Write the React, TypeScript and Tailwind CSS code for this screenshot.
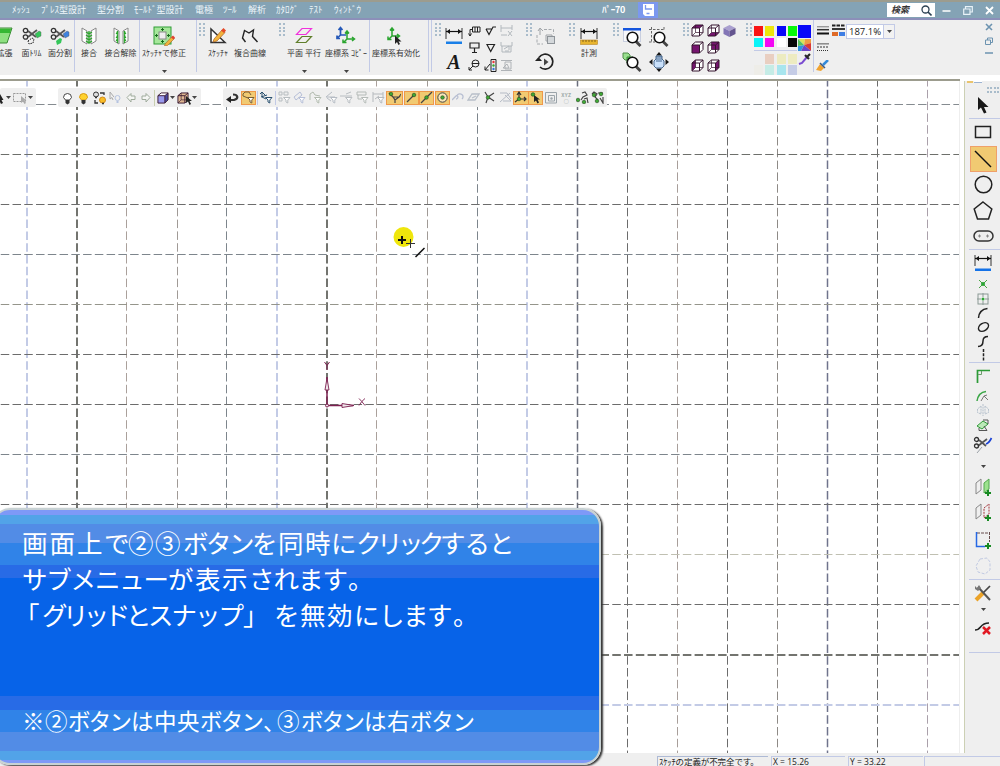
import React from "react";

type Kids = { children?: React.ReactNode };

function Ico({ w, h, children }: { w: number; h: number } & Kids) {
  return (
    <svg width={w} height={h} viewBox={`0 0 ${w} ${h}`} fill="none" className="block shrink-0">
      {children}
    </svg>
  );
}

const Sep = () => <div className="h-[52px] w-px shrink-0 bg-[#c2cae6]" />;

function Grip() {
  return (
    <div className="mt-[3px] grid h-[12px] w-[6px] shrink-0 grid-cols-2 gap-x-[2px] gap-y-[1.5px]">
      {Array.from({ length: 8 }, (_, i) => (
        <span key={i} className="h-[2px] w-[2px] bg-[#a9bccb]" />
      ))}
    </div>
  );
}

function Caret() {
  return (
    <Ico w={5} h={3}>
      <path d="M0 0H5L2.5 3Z" fill="#444" />
    </Ico>
  );
}

function Tool({ label, className, caret, children }: { label: string; className: string; caret?: boolean } & Kids) {
  return (
    <div className={`flex h-[55px] shrink-0 flex-col items-center overflow-hidden whitespace-nowrap ${className}`}>
      <div className="mt-[6px] flex h-[20px] items-center justify-center">{children}</div>
      <span className="mt-[2px] h-[9px] text-[8px] leading-[9px] text-[#333]">{label}</span>
      {caret && <div className="mt-[13px]"><Caret /></div>}
    </div>
  );
}

/* ---------- shared drawings ---------- */
function Dim({ bar, w = 18, ruler }: { bar?: string; w?: number; ruler?: boolean }) {
  return (
    <Ico w={w} h={18}>
      <path d={`M1 1V12M${w - 1} 1V12`} stroke="#333" strokeWidth="1" />
      <path d={`M1 4.5H${w - 1}`} stroke="#111" strokeWidth="1.2" />
      <path d={`M1.5 4.5L5 2V7ZM${w - 1.5} 4.5L${w - 5} 2V7Z`} fill="#111" />
      {bar && <rect x="1" y="14.5" width={w - 2} height="2.5" fill={bar} />}
      {ruler && (
        <g>
          <rect x="0.5" y="13" width="17" height="4.5" fill="#e8b42e" stroke="#b9862a" strokeWidth=".6" />
          <path d="M3 13v2M6 13v2M9 13v2M12 13v2M15 13v2" stroke="#705010" strokeWidth=".8" />
        </g>
      )}
    </Ico>
  );
}

function Shears({ a, b, c }: { a?: string; b?: string; c?: string }) {
  return (
    <Ico w={20} h={18}>
      <path d="M6 4L14 10M6 10L15 3" stroke="#555" strokeWidth="1.8" />
      <circle cx="3.5" cy="3.5" r="2.2" stroke="#333" strokeWidth="1.3" />
      <circle cx="3.5" cy="10" r="2.2" stroke="#333" strokeWidth="1.3" />
      {a && <path d="M13 7l4-3 2 1v4l-4 2z" fill={a} stroke="#555" strokeWidth=".4" />}
      {b && <path d="M6 14l4-3 2 1-1 4-4 2z" fill={b} />}
      {c && <path d="M6 14l4-3 2 1-1 4-4 1z" stroke={c} strokeDasharray="1.5 1" />}
    </Ico>
  );
}

function Join({ split }: { split?: boolean }) {
  return (
    <Ico w={16} h={18}>
      <path d="M1 1L6 4V17L1 14ZM15 1L10 4V17L15 14Z" fill="#fff" stroke="#888" strokeWidth="1" />
      {split ? (
        <path d="M4.500 4V16M11.500 4V16M3 6l2 1M3 10l2 1M13 6l-2 1M13 10l-2 1M3 13l2 1M13 13l-2 1" stroke="#2ca52c" strokeWidth="1.5" />
      ) : (
        <path d="M8 4V17M5 5l3 2l3-2M5 8l3 2l3-2M5 11l3 2l3-2M5 14l3 2l3-2" stroke="#2ca52c" strokeWidth="1.3" />
      )}
    </Ico>
  );
}

function Lens({ kind }: { kind: "window" | "area" | "part" }) {
  return (
    <Ico w={20} h={20}>
      {kind === "window" && (
        <g>
          <rect x="1.500" y="1.500" width="17" height="13" fill="#f8f8fa" stroke="#c9cfdf" />
          <rect x="1" y="1" width="18" height="2.500" fill="#1455dd" />
        </g>
      )}
      {kind === "area" && <path d="M0 2.500H15M2.500 0V16M15 0V4M0 15H6" stroke="#666" strokeDasharray="2.500 1.500" />}
      {kind === "part" && (
        <g>
          <path d="M1 1H6L8 3V8H3L1 6Z" fill="#9be08f" stroke="#4f8b48" />
          <path d="M5 5H11V11H5Z" fill="#5fd552" stroke="#388b38" />
        </g>
      )}
      <path d="M14 14.500L18.500 19" stroke="#444" strokeWidth="2.800" />
      <circle cx="10.500" cy="10.500" r="5.300" fill="#fff" stroke="#111" strokeWidth="1.600" />
    </Ico>
  );
}

function Cube({ face, size = 13 }: { face: string; size?: number }) {
  const p = "#76146f";
  return (
    <svg width={size} height={size} viewBox="0 0 13 13" fill="none" className="block shrink-0">
      <path d="M1 4L4.500 1H12V8.500L8.500 12H1Z" fill="#fff" />
      {face === "top" && <path d="M1 4L4.500 1H12L8.500 4Z" fill={p} />}
      {face === "bottom" && <path d="M1 12L4.500 8.500H12L8.500 12Z" fill={p} />}
      {face === "front" && <path d="M1 4H8.500V12H1Z" fill={p} />}
      {face === "back" && <path d="M4.500 1H12V8.500H4.500Z" fill={p} />}
      {face === "left" && <path d="M1 4L4.500 1V8.500L1 12Z" fill={p} />}
      {face === "right" && <path d="M8.500 4L12 1V8.500L8.500 12Z" fill={p} />}
      {face === "violet" && (
        <g>
          <path d="M1 4H8.500V12H1Z" fill="#9a9aee" />
          <path d="M8.500 4L12 1V8.500L8.500 12Z" fill="#4848a0" />
        </g>
      )}
      {face === "brown" && <path d="M1 4L4.500 1H12V8.500L8.500 12H1Z" fill="#dfb792" />}
      <path d="M1 4H8.500V12H1ZM1 4L4.500 1H12L8.500 4M12 1V8.500L8.500 12" stroke="#35152f" strokeWidth="1" />
      {face !== "front" && face !== "violet" && <path d="M4.500 1V8.500H12M4.500 8.500L1 12" stroke="#35152f" strokeWidth=".7" />}
    </svg>
  );
}

function Axes({ blue, cursor }: { blue?: boolean; cursor?: boolean }) {
  return (
    <Ico w={20} h={20}>
      {blue && <path d="M4.500 2V9L1.500 12M4.500 9H10M2.500 4L4.500 1.500L6.500 4M1 9.500V12.500H4" stroke="#2659b8" strokeWidth="1.700" />}
      <g transform={blue ? "translate(6 3)" : "translate(1 0)"}>
        <path d="M5 2V10L2 13M5 10H12M3 4.500L5 2L7 4.500M1 10.500V13.500H4.500M10 8L12.500 10L10 12" stroke="#2aa52f" strokeWidth="1.500" />
      </g>
      {cursor && <path d="M9 9.500V18L11 16L12.500 19L14 18L12.500 15.500H15.500Z" fill="#222" />}
    </Ico>
  );
}

function Cells({ children, className }: { className: string } & Kids) {
  return <div className={`grid shrink-0 place-items-center ${className}`}>{children}</div>;
}

function TextA() {
  return <span className="font-['Liberation_Serif',serif] text-[20px] font-bold italic leading-[18px] text-[#181818]">A</span>;
}

/* ---------- title bar ---------- */
function TitleBar() {
  return (
    <header className="flex h-[20px] shrink-0 items-center border-b-2 border-t-2 border-b-[#8c8fb9] border-t-[#9c9c8e] bg-[#84a3b5] text-[9px] leading-[16px] text-[#eef6fa]">
      <nav className="flex w-[602px] whitespace-nowrap pl-[12px]">
        <span className="w-[29px]">ﾒｯｼｭ</span>
        <span className="w-[56px]">ﾌﾟﾚｽ型設計</span>
        <span className="w-[37px]">型分割</span>
        <span className="w-[61px]">ﾓｰﾙﾄﾞ型設計</span>
        <span className="w-[28px]">電極</span>
        <span className="w-[25px]">ﾂｰﾙ</span>
        <span className="w-[28px]">解析</span>
        <span className="w-[33px]">ｶﾀﾛｸﾞ</span>
        <span className="w-[25px]">ﾃｽﾄ</span>
        <span>ｳｨﾝﾄﾞｳ</span>
      </nav>
      <span className="w-[36px] whitespace-nowrap font-bold tracking-[-0.3px] text-white">ﾊﾟｰ70</span>
      <div className="flex h-[16px] w-[20px] items-center justify-center bg-[#7b98ef]">
        <Ico w={11} h={12}>
          <path d="M0 0H11V12H2L0 10Z" fill="#fff" />
          <path d="M2.500 1V5H9M3.500 9.500H6.500" stroke="#7b98ef" strokeWidth="1.300" />
        </Ico>
      </div>
      <div className="ml-[229px] flex h-[14px] w-[48px] items-center justify-between bg-white pl-[4px] pr-[3px]">
        <span className="text-[9px] font-bold italic leading-[12px] text-[#333]">検索</span>
        <Ico w={11} h={11}>
          <circle cx="4.500" cy="4.500" r="3.500" stroke="#2b4052" strokeWidth="1.300" />
          <path d="M7 7L10.500 10.500" stroke="#2b4052" strokeWidth="1.600" />
        </Ico>
      </div>
      <div className="ml-[7px] flex items-center gap-[12px]">
        <Ico w={9} h={9}><path d="M0.500 5H8.500" stroke="#fff" strokeWidth="1.500" /></Ico>
        <Ico w={10} h={9}><path d="M2.500 3V.700H9.300V6H7M.700 3H7V8.300H.700Z" stroke="#e8f2f8" strokeWidth="1.200" /></Ico>
        <Ico w={9} h={9}><path d="M1 1L8 8M8 1L1 8" stroke="#fff" strokeWidth="1.800" /></Ico>
      </div>
    </header>
  );
}

/* ---------- ribbon ---------- */
function Swatches() {
  return (
    <div className="w-[43px] shrink-0 pt-[6px]">
      <div className="grid grid-cols-4 gap-x-[2px] gap-y-[2px]">
        {["bg-[#f91414]", "bg-[#eee60b]", "bg-[#0808f8]", "bg-[#08f808]", "bg-[#08f4f8]", "bg-[#f408f4]", "bg-white", "bg-[#080808]"].map((c) => (
          <span key={c} className={`h-[9.500px] w-[9px] ${c}`} />
        ))}
      </div>
      <div className="mt-[3px] h-px bg-[#c2cae6]" />
      <div className="mt-[3px] grid grid-cols-4 gap-x-[2px] gap-y-[1.500px]">
        {["bg-[#efefef]", "bg-[#e9cfc1]", "bg-[#ecebc0]", "bg-[#edebc1]", "bg-[#eeede8]", "bg-[#c5ece6]", "bg-[#a8e5ee]", "bg-[#c5cce6]"].map((c) => (
          <span key={c} className={`h-[9.500px] w-[9px] ${c}`} />
        ))}
      </div>
    </div>
  );
}

function Ribbon() {
  return (
    <div className="flex h-[55px] shrink-0 bg-[#efefef]">
      <Tool label="拡張" className="-ml-[4px] w-[17px]">
        <Ico w={17} h={18}><path d="M3 1H16L11 16H0" fill="#8ee080" stroke="#3b8b35" /><path d="M3 2H15L14 6H1" fill="#35b733" /></Ico>
      </Tool>
      <Tool label="面ﾄﾘﾑ" className="ml-[4px] w-[29px]"><Shears a="#35c65a" c="#222" /></Tool>
      <Tool label="面分割" className="w-[28px]"><Shears a="#3f83df" b="#35c65a" /></Tool>
      <Sep />
      <Tool label="接合" className="w-[28px]"><Join /></Tool>
      <Tool label="接合解除" className="w-[35px]"><Join split /></Tool>
      <div className="w-[1px]" /><Sep />
      <Tool label="ｽｹｯﾁｬで修正" className="w-[48px]" caret>
        <Ico w={22} h={20}>
          <rect x="1" y="1" width="17" height="17" fill="#a6e79b" stroke="#2f9d34" />
          <rect x="6" y="6" width="7" height="7" fill="#eee" stroke="#888" />
          <path d="M9.500 2V5M9.500 14V17M2 9.500H5M14 9.500H17M8 3.500h3M8 15.500h3M3.500 8v3M15.500 8v3" stroke="#176b1c" />
          <path d="M12 18L19 10.500L21.500 12.500L14.500 19.500L11.500 20Z" fill="#f1b43c" stroke="#a8672c" strokeWidth=".600" />
          <path d="M18 11.500L20 9.500L22 11.500L20.500 13.500Z" fill="#e24432" />
        </Ico>
      </Tool>
      <div className="w-[8px]" /><Sep /><div className="w-[2px]" />
      <Grip />
      <Tool label="ｽｹｯﾁｬ" className="w-[26px]">
        <Ico w={18} h={18}>
          <path d="M2 2V15.500H16Z" fill="#fff" stroke="#333" strokeWidth="1.500" />
          <path d="M5 12L13 3L16 5.500L8 14L4 15Z" fill="#f2b33d" stroke="#a85f23" strokeWidth=".700" />
          <path d="M12 3.500L14.500 1L17 3.500L15 6Z" fill="#e34a2a" />
        </Ico>
      </Tool>
      <Tool label="複合曲線" className="w-[38px]">
        <Ico w={18} h={17}><path d="M4.500 14L1.500 10L3.500 2.500L8 5L12.500 2L11.500 8.500L16.500 14" stroke="#222" strokeWidth="1.400" /></Ico>
      </Tool>
      <div className="w-[10px]" /><Grip />
      <Tool label="平面 平行" className="w-[38px]" caret>
        <Ico w={18} h={18}><path d="M1.500 7.500L7 1.500H16.500L11 7.500Z" stroke="#f132dc" strokeWidth="1.200" /><path d="M1.500 15.500L7 9.500H16.500L11 15.500Z" stroke="#607f2c" strokeWidth="1.200" /></Ico>
      </Tool>
      <Tool label="座標系 ｺﾋﾟｰ" className="w-[46px]" caret><Axes blue /></Tool>
      <Sep />
      <Tool label="座標系有効化" className="w-[52px]"><Axes cursor /></Tool>
      <div className="w-[6px]" /><Sep /><div className="w-[2px]" /><Sep /><div className="w-[3px]" />
      <Grip />
      <Cells className="ml-[4px] w-[18px] grid-rows-[18px_30px] content-start pt-[7px]">
        <Dim bar="#197fe8" />
        <div className="pt-[3px]"><TextA /></div>
      </Cells>
      <Cells className="ml-[3px] w-[50px] grid-cols-[17px_15px_18px] grid-rows-[17px_17px_18px] content-start pt-[2px]">
        <Ico w={13} h={12}><path d="M4.500 2H12V7H4.500ZM7 2V7M9.500 2V7M4.500 4.500H2V11M0.500 8.500L2 11L3.500 8.500" stroke="#222" /></Ico>
        <Ico w={12} h={12}><path d="M1 4L4 9.500L8 2H11M1 4H7" stroke="#222" strokeWidth="1.200" /></Ico>
        <Ico w={14} h={13}><path d="M1 1V8M12 1V6M1 4H12M1 11H7M8 7L12 12M12 7L8 12" stroke="#b2b8bd" /></Ico>
        <Ico w={12} h={12}><path d="M1 1H10V6H1ZM5.500 6V10M3 10.500H8" stroke="#222" strokeWidth="1.200" /></Ico>
        <Ico w={12} h={12}><path d="M2 2.500H9.500L5.700 9.500Z" stroke="#222" strokeWidth="1.200" /></Ico>
        <Ico w={14} h={13}><path d="M1 1V5H12V1M2 5V11H11V5M4 8L9 5M9 5V9M5 10H9" stroke="#b2b8bd" /></Ico>
        <Ico w={13} h={12}><circle cx="7.500" cy="4.500" r="3.500" stroke="#222" /><path d="M4 4.500H11M5 7L1 11M1 8V11H4" stroke="#222" /></Ico>
        <Ico w={14} h={13}><path d="M7 .500H12V12.500H7ZM1 11L6 5M1 7.500V11H4.500" stroke="#222" /><circle cx="9.500" cy="3" r="1.200" fill="#e33" /><circle cx="9.500" cy="6.500" r="1.200" fill="#3a3" /><circle cx="9.500" cy="10" r="1.200" fill="#37d" /></Ico>
        <Ico w={14} h={13}><path d="M1 1.500H12M1 11.500H12M5 3H11V10H5ZM3 9L7 5L9 9Z" stroke="#afb3b7" /></Ico>
      </Cells>
      <div className="w-[10px]" /><Grip />
      <Cells className="w-[26px] grid-rows-[24px_27px] content-start pt-[4px]">
        <Ico w={20} h={20}><path d="M9 3.500H18.500V8M2 9V18H8" stroke="#a5a9ad" strokeDasharray="3 1.500" /><path d="M5 9V3M3 5L5 2L8 5M11 9H17V15H11Z" stroke="#a0a4a8" /><rect x="12.500" y="10.500" width="7" height="7" fill="#d4d8db" stroke="#8e9499" /></Ico>
        <Ico w={20} h={18}><path d="M4 4.500A7.500 7.500 0 1 1 5 14" stroke="#222" strokeWidth="1.700" /><path d="M0 8H7L3.500 4Z" fill="#222" /><path d="M9 5.500L13.500 9L9 12.500Z" fill="#444" /></Ico>
      </Cells>
      <div className="w-[11px]" /><Grip />
      <Tool label="計測" className="w-[28px]"><Dim ruler /></Tool>
      <div className="w-[10px]" /><Grip />
      <Cells className="-ml-px w-[54px] grid-cols-2 grid-rows-2 pt-[4px]">
        <Lens kind="window" /><Lens kind="area" /><Lens kind="part" />
        <Ico w={22} h={20}>
          <path d="M11 0L14 3.500H8ZM11 20L14 16.500H8ZM1 10L4.500 7V13ZM21 10L17.500 7V13Z" fill="#171717" />
          <path d="M6 9L8 7L8 4H14V7L16 9V14L14 16H8L6 14Z" fill="#c9e0fa" stroke="#46678c" />
          <path d="M9 4V10M11 4V10M13 4V10" stroke="#46678c" />
        </Ico>
      </Cells>
      <div className="w-[11px]" /><Grip />
      <Cells className="ml-px w-[47px] grid-cols-[15px_16px_16px] grid-rows-[17px_17px_18px] content-start pt-[2px]">
        <Cube face="top" /><Cube face="bottom" />
        <Ico w={13} h={14}><path d="M.500 4L6.500 1L12.500 4L6.500 7Z" fill="#aaa0cf" /><path d="M.500 4V10L6.500 13V7Z" fill="#8376b6" /><path d="M12.500 4V10L6.500 13V7Z" fill="#64558f" /></Ico>
        <Cube face="front" /><Cube face="back" /><span />
        <Cube face="left" /><Cube face="right" />
      </Cells>
      <div className="w-[9px]" /><Grip />
      <div className="w-[2px]" />
      <Swatches />
      <div className="ml-[1px] flex w-[13px] shrink-0 flex-col gap-[1px] pt-[5px]">
        <div className="h-[13px] bg-[#0808f8]" />
        <Ico w={13} h={12}><rect width="13" height="12" fill="#eee" /><path d="M6 6L0 0H7Z" fill="#d8e35a" /><path d="M6 6L7 0H13V4Z" fill="#ef9c42" /><path d="M6 6L13 4V12Z" fill="#d93a36" /><path d="M6 6L13 12H3Z" fill="#6d45c7" /><path d="M6 6L3 12H0V7Z" fill="#2f95df" /><path d="M6 6L0 7V0Z" fill="#55c060" /></Ico>
        <Ico w={13} h={13}><path d="M1 12L4 11L9 5" stroke="#7a4bd0" strokeWidth="2" /><path d="M7 3L11 7M9 5L12 2" stroke="#282828" strokeWidth="2.200" /></Ico>
      </div>
      <div className="w-[2px]" /><Sep />
      <div className="ml-px flex w-[15px] shrink-0 flex-col items-center gap-[8px] pt-[6px]">
        <Ico w={12} h={9}><path d="M0 .800H12" stroke="#777" /><path d="M0 3.700H12" stroke="#333" strokeWidth="1.500" /><path d="M0 7.500H12" stroke="#111" strokeWidth="2" /></Ico>
        <Ico w={12} h={9}><path d="M0 .800H12" stroke="#888" strokeWidth="1.500" /><path d="M0 4H12" stroke="#333" strokeDasharray="2 1" /><path d="M0 7.500H12" stroke="#333" strokeDasharray="1 1" /></Ico>
        <Ico w={13} h={12}><path d="M7 5L12 0" stroke="#338ad9" strokeWidth="2.500" /><path d="M4 4L8 8L5 11L0 10Z" fill="#f0a331" /><path d="M4 3L9 8" stroke="#3b5b86" strokeWidth="1.500" /></Ico>
      </div>
      <div className="ml-[2px] w-[14px] shrink-0 pt-[4px]">
        <Ico w={13} h={13}><path d="M0 1.500H13" stroke="#222" strokeWidth="2" strokeDasharray="3.500 1" /><path d="M0 5H13" stroke="#222" strokeWidth="1.800" /><rect x="0" y="8" width="6" height="4" fill="#df6b28" /><rect x="7" y="8" width="6" height="4" fill="#3e7ee4" /></Ico>
      </div>
      <div className="mt-[4px] flex h-[15px] w-[49px] shrink-0 border border-[#c2cae6] bg-white">
        <span className="w-[36px] text-center font-['Open_Sans','Noto_Sans',sans-serif] text-[9.500px] leading-[14px] text-[#222]">187.1%</span>
        <span className="flex flex-1 items-center justify-center border-l border-[#c2cae6] bg-[#f2f2f2]"><Caret /></span>
      </div>
      <div className="ml-[90px] flex flex-col gap-[6px] pt-[3px]">
        <Ico w={8} h={8}><path d="M1 1L7 7M7 1L1 7" stroke="#6c93b0" strokeWidth="1.600" /></Ico>
        <Ico w={8} h={8}><path d="M2.500 3V1H7.500V5.500H5.500M.500 3H5.500V7.500H.500Z" stroke="#6c93b0" /></Ico>
        <Ico w={8} h={6}><path d="M0 2H8" stroke="#6c93b0" strokeWidth="1.500" /></Ico>
      </div>
    </div>
  );
}

/* ---------- drawing canvas ---------- */
const verticals: [number, string, number][] = [
  [27, "#c3cbe6", 2], [77, "#73746f", 2], [126.5, "#aaa09b", 1], [177.5, "#a09a96", 1], [226.5, "#7d858c", 1],
  [277, "#c3cbe6", 2], [327, "#73746f", 2], [376.5, "#aaa09b", 1], [427.5, "#a09a96", 1], [477.5, "#7d858c", 1],
  [527, "#c3cbe6", 2], [577.5, "#6a6e7c", 1.5], [627.5, "#6c6c6c", 1], [677.5, "#a89e9a", 1], [727.5, "#6c6c6c", 1],
  [777.5, "#8e8a86", 1], [827.5, "#6f738c", 1.5], [877.5, "#6c6c6c", 1], [927.5, "#aaa0aa", 1],
];
const horizontals: [number, string, number][] = [
  [23.5, "#858b90", 1], [73.5, "#6d6f6b", 1], [123.5, "#6c6c6c", 1], [173.5, "#7d858c", 1], [223.5, "#95958b", 1],
  [273.5, "#6c6c6c", 1], [323.5, "#6c6c6c", 1], [373.5, "#7d858c", 1], [423.5, "#6c6c6c", 1], [473.5, "#c0c0b2", 1],
  [523.5, "#6c6c6c", 1], [574, "#73746f", 2], [624, "#c3cbe6", 2],
];

function GridDrawing() {
  return (
    <svg width="959" height="672" viewBox="0 0 959 672" fill="none" className="block">
      {verticals.map(([x, c, w]) => (
        <path key={x} d={`M${x} -3V672`} stroke={c} strokeWidth={w} strokeDasharray="8.500 3.300" />
      ))}
      {horizontals.map(([y, c, w]) => (
        <path key={y} d={`M-11 ${y}H959`} stroke={c} strokeWidth={w} strokeDasharray="8.500 3.260" />
      ))}
      <circle cx="403.500" cy="156" r="10" fill="#efe60c" />
      <path d="M402 155V163M398 159H406" stroke="#111" strokeWidth="2" />
      <path d="M410.500 158V167M406 162.500H415" stroke="#333" />
      <path d="M415.500 176L424.500 167" stroke="#111" strokeWidth="1.500" />
      <g stroke="#7d2050">
        <path d="M327 323V296" strokeWidth="1.500" />
        <path d="M327 297L325 309H329Z" fill="#efe7eb" strokeWidth=".900" />
        <path d="M327 324.500H353" strokeWidth="1.500" />
        <path d="M342 322.500L354 324.500L342 326.500Z" fill="#efe7eb" strokeWidth=".900" />
        <path d="M324.500 281L327 284.500L329.500 281M327 284.500V289" />
        <path d="M359 317.500L361.800 320.500L365 317.500M361.800 320.500L359 324.500M361.800 320.500L365 324.500" strokeWidth=".900" />
        <circle cx="327" cy="324.500" r="1.500" fill="#efe7eb" />
      </g>
    </svg>
  );
}

function Bulb({ on }: { on?: boolean }) {
  return (
    <Ico w={11} h={14}>
      <path d="M3.500 9L1.500 6.500A4 4 0 1 1 9.500 6.500L7.500 9Z" fill={on ? "#ffd22e" : "#fff"} stroke={on ? "#d69a14" : "#444"} />
      <path d="M3.500 9H7.500V12L5.500 13.500L3.500 12Z" fill="#333" />
    </Ico>
  );
}

const Mini = ({ children, w = "w-[15.700px]" }: { w?: string } & Kids) => (
  <span className={`flex shrink-0 justify-center ${w}`}>{children}</span>
);

const Hot = ({ children, w }: { w: string } & Kids) => (
  <span className={`flex h-[14px] shrink-0 items-center justify-center border border-[#ef9848] bg-[#f1ca72] ${w}`}>{children}</span>
);

function Filter({ d, color }: { d: string; color: string }) {
  return (
    <Ico w={13} h={13}>
      <path d={d} stroke={color} />
      <path d="M5.500 6.500H12L9.800 9V12L8 11V9Z" fill="#fff" stroke={color} />
    </Ico>
  );
}

const Dots = ({ d, pts, line = "#444" }: { d: string; pts: number[][]; line?: string }) => (
  <Ico w={13} h={13}>
    <path d={d} stroke={line} strokeWidth="1.200" />
    {pts.map(([x, y]) => <circle key={`${x}-${y}`} cx={x} cy={y} r="1.800" fill="#3da934" stroke="#23461d" strokeWidth=".600" />)}
  </Ico>
);

function FloatBars() {
  const bar = "absolute top-[7px] flex h-[19px] items-center rounded-[2px] bg-[#efefef]";
  return (
    <>
      <div className={`${bar} left-0 w-[36px]`}>
        <Ico w={4} h={12}><path d="M0 2L3.500 8H1.500L3 11L1 12L0 10Z" fill="#222" /></Ico>
        <span className="ml-[2px]"><Caret /></span>
        <span className="ml-[2px]"><Ico w={14} h={12}><path d="M.500 1.500H12.500V9.500H.500Z" stroke="#999" strokeDasharray="2 1" /><path d="M8 4V11L10 9.500L11.500 12L13 11L11.500 8.500H13.500Z" fill="#aaa" /></Ico></span>
        <span className="ml-[1px]"><Caret /></span>
      </div>
      <div className={`${bar} left-[58px] w-[143px] pl-[2px]`}>
        <Mini><Bulb /></Mini><Mini><Bulb on /></Mini>
        <Mini><Ico w={13} h={14}><circle cx="3" cy="3.500" r="2.500" stroke="#333" fill="#ddd" /><circle cx="9.500" cy="9" r="3" fill="#f8bd27" stroke="#d28b18" /><path d="M7 2H11V4M2 9V12H5M2 6.500H4M9 12.500H11" stroke="#333" strokeWidth="1.300" /></Ico></Mini>
        <Mini><Ico w={12} h={13}><path d="M1 1V8L3 6.500L4 9M1 1L5 6" stroke="#aaa" /><circle cx="8.500" cy="7" r="2.500" stroke="#b5c3e0" /><path d="M8.500 10V12" stroke="#b5c3e0" strokeWidth="2" /></Ico></Mini>
        <Mini><Ico w={10} h={11}><path d="M1 5.500L5 1.500V4H9V7.500H5V10Z" fill="#f5f6f4" stroke="#9fab9c" /></Ico></Mini>
        <Mini><Ico w={10} h={11}><path d="M9 5.500L5 1.500V4H1V7.500H5V10Z" fill="#f5f6f4" stroke="#9fab9c" /></Ico></Mini>
        <span className="h-[16px] w-px bg-[#c9cfb0]" />
        <Mini w="w-[15px]"><Cube face="violet" size={12} /></Mini><Caret />
        <Mini><span className="relative block"><Cube face="brown" size={12} /><span className="absolute -right-[3px] top-[4px]"><Ico w={6} h={9}><path d="M0 0V7L2 5.500L3.500 9L5 8L3.500 5H6Z" fill="#222" /></Ico></span></span></Mini>
        <span className="ml-[1px]"><Caret /></span>
      </div>
      <div className={`${bar} left-[223px] w-[384px] pl-[2px]`}>
        <Mini><Ico w={13} h={10}><path d="M5 7H8C13 5.500 12 1.500 7 1.500" stroke="#333" strokeWidth="2.200" /><path d="M0 6.500L5 3V10Z" fill="#222" /></Ico></Mini>
        <Hot w="w-[15px]"><Filter d="M1 3L3 1H7L9 4M1 3V5L6 7" color="#795f35" /></Hot>
        <span className="mx-[1px] h-[14px] w-px bg-[#c2cae6]" />
        <Mini><Filter d="M2 1V6L6 8M0 3L2 1L5 4M1 6L7 4" color="#2a506e" /></Mini>
        <span className="ml-px h-[14px] w-px bg-[#c2cae6]" />
        <Mini><Filter d="M1 1H4V4H1ZM6 1H10V4H6ZM1 7H4V10H1Z" color="#b7bdc0" /></Mini>
        <Mini><Filter d="M1 6L7 1L9 4L3 9Z" color="#b6bfd8" /></Mini>
        <Mini><Filter d="M1 9V3L4 1L6 4L11 5" color="#b2bbaf" /></Mini>
        <Mini><Filter d="M1 6L7 1M1 6H10M2 7L6 10" color="#b6bcc4" /></Mini>
        <Mini><Filter d="M0 5H12M6 3L11 1" color="#b9bec2" /></Mini>
        <Mini><Filter d="M1 1H10V4H1ZM2 4V8H6" color="#b5bbb8" /></Mini>
        <Mini><Filter d="M1 1V11M11 1V6M1 3H11M3 8L7 5" color="#b5b9bd" /></Mini>
        <Hot w="w-[17px]"><Dots d="M1 2L5 6L7 9V12M5 6H11L7 9M11 6L13 3" pts={[[3, 3]]} /></Hot>
        <Hot w="ml-[1px] w-[15px]"><Dots d="M2 11L9 4" pts={[[9, 4]]} /></Hot>
        <Hot w="w-[15px]"><Dots d="M1 12L12 1" pts={[[6.5, 6.5]]} /></Hot>
        <Hot w="ml-[1px] w-[15px]"><Ico w={13} h={13}><circle cx="6.500" cy="6.500" r="4.700" stroke="#444" fill="#f7e4b8" /><circle cx="6.500" cy="6.500" r="1.800" fill="#3da934" stroke="#23461d" strokeWidth=".600" /></Ico></Hot>
        <Mini><Ico w={13} h={13}><path d="M0 9L4 5C6 3 7 8 4 8M5 4C9 1 13 5 10 8" stroke="#b8bfd2" strokeWidth="1.300" /></Ico></Mini>
        <Mini><Ico w={13} h={13}><path d="M1 9L5 3H12L8 9ZM5 7L9 5" stroke="#b8bfc9" strokeWidth="1.300" /></Ico></Mini>
        <Mini><Dots d="M2 1L5 6L3 12M5 6L11 2M5 6L11 10" pts={[[5, 6.5]]} /></Mini>
        <Mini><Ico w={13} h={13}><path d="M1 2H8L12 8M1 11L11 2M4 10H12L6 4" stroke="#b5bbc5" /></Ico></Mini>
        <Hot w="w-[16px]"><Dots d="M5 2V8L1 11M5 8H12M3 4L5 1L7 4M10 6L12 8L10 10" pts={[[5, 8]]} line="#333" /></Hot>
        <Hot w="-ml-px w-[15px]"><Ico w={13} h={13}><path d="M5 4V11L7 9.500L8.500 12.500L10 11.500L8.500 8.500H11Z" fill="#222" /><circle cx="4" cy="3.500" r="1.800" fill="#3da934" stroke="#23461d" strokeWidth=".600" /></Ico></Hot>
        <Mini><Ico w={12} h={12}><path d="M.500 .500H11.500V11H.500ZM3.500 3.500H9.500V9H3.500Z" stroke="#9ba4aa" /><circle cx="6.500" cy="6.500" r="1.200" fill="#9ba4aa" /></Ico></Mini>
        <Mini><span className="text-center text-[5px] font-bold leading-[6px] tracking-[.5px] text-[#9eaaa8]">XYZ<br />○</span></Mini>
        <Mini><Dots d="M6 2L9 1L11 4L7 6L5 9M8 8L11 7L12 12" pts={[[2, 9], [8, 11]]} /></Mini>
        <Mini><Dots d="M1 3L3 1L6 3L4 6L7 9M7 2L12 2M9 7L12 12V6" pts={[[3, 4], [10, 3], [6, 10]]} /></Mini>
      </div>
    </>
  );
}

/* ---------- message panel ---------- */
const W = ({ t, c }: { t: string; c: string }) => <span className={`shrink-0 ${c}`}>{t}</span>;

function Message() {
  return (
    <section className="absolute -left-[8px] top-[427px] h-[257px] w-[609px] rounded-[18px] border-2 border-[#c8d2d4] bg-[linear-gradient(180deg,#7e99f7_0_5px,#52a3e8_5px_14px,#528ce6_14px_33px,#3083e8_33px_55px,#286be6_55px_68px,#0763e8_68px_186px,#286be6_186px_200px,#3083e8_200px_222px,#528ce6_222px_241px,#52a3e8_241px_250px,#7e99f7_250px)] pl-[28px] pt-[14px] text-white shadow-[2px_1px_2px_#333]">
      <div className="flex h-[36px] whitespace-nowrap text-[25.500px] leading-[36px]">
        <W t="画面上" c="w-[82px] tracking-[2px]" />
        <W t="で" c="w-[24px]" />
        <W t="②③" c="w-[55px] tracking-[1.500px]" />
        <W t="ボタン" c="w-[69px] tracking-[-2.500px]" />
        <W t="を" c="w-[26px]" />
        <W t="同時" c="w-[53px] tracking-[1.500px]" />
        <W t="に" c="w-[25px]" />
        <W t="クリック" c="w-[84px] tracking-[-4.500px]" />
        <W t="すると" c="tracking-[-1px]" />
      </div>
      <div className="flex h-[36px] whitespace-nowrap text-[25.500px] leading-[36px]">
        <W t="サブメニュー" c="w-[146px] tracking-[-1.200px]" />
        <W t="が" c="w-[27px]" />
        <W t="表示" c="w-[54px] tracking-[1.500px]" />
        <W t="されます" c="w-[99px] tracking-[-1px]" />
        <W t="。" c="" />
      </div>
      <div className="flex h-[36px] whitespace-nowrap text-[25.500px] leading-[36px]">
        <W t="「" c="-ml-[8px] w-[28px]" />
        <W t="グリッド" c="w-[84px] tracking-[-4.600px]" />
        <W t="と" c="w-[22px] tracking-[-4px]" />
        <W t="スナップ" c="w-[95px] tracking-[-2px]" />
        <W t="」" c="w-[31px]" />
        <W t="を" c="w-[26px]" />
        <W t="無効" c="w-[54px] tracking-[1.500px]" />
        <W t="に" c="w-[25px]" />
        <W t="します" c="w-[74px] tracking-[-1.500px]" />
        <W t="。" c="" />
      </div>
      <div className="mt-[70px] flex h-[36px] whitespace-nowrap text-[22.500px] leading-[36px]">
        <W t="※" c="w-[23px]" />
        <W t="②" c="w-[23px]" />
        <W t="ボタン" c="w-[63px] tracking-[-1.700px]" />
        <W t="は" c="w-[23px]" />
        <W t="中央" c="w-[46px] tracking-[.500px]" />
        <W t="ボタン" c="w-[63px] tracking-[-1.700px]" />
        <W t="、" c="w-[14px] tracking-[-9px]" />
        <W t="③" c="w-[24px]" />
        <W t="ボタン" c="w-[63px] tracking-[-1.700px]" />
        <W t="は" c="w-[23px]" />
        <W t="右" c="w-[23px]" />
        <W t="ボタン" c="tracking-[-1.300px]" />
      </div>
    </section>
  );
}

/* ---------- right toolbar ---------- */
const Row = ({ h, children }: { h: string } & Kids) => (
  <div className={`flex shrink-0 items-center justify-center ${h}`}>{children}</div>
);
const Rule = ({ h }: { h: string }) => (
  <div className={`flex shrink-0 items-center ${h}`}><div className="ml-[3px] h-px flex-1 bg-[#c2cae6]" /></div>
);
const Plus = () => <path d="M13 13V19M10 16H16" stroke="#178a22" strokeWidth="2" />;

function SideBar() {
  return (
    <aside className="ml-[4px] w-[36px] shrink-0 border-l border-[#ccd0b4] bg-[#efefef]">
      <div className="flex h-[13px] flex-col">
        <div className="ml-[2px] flex gap-[1px]"><span className="h-[2px] w-[6px] bg-[#eac46d]" /><span className="h-[2px] w-[8px] border-b border-[#9db3d2] bg-white" /></div>
        <div className="ml-[22px] mt-[4px] grid w-[12px] grid-cols-4 gap-[1.500px]">
          {Array.from({ length: 8 }, (_, i) => <span key={i} className="h-[2px] bg-[#a9bccb]" />)}
        </div>
      </div>
      <div className="flex flex-col pl-[1px]">
        <Row h="h-[23px]"><Ico w={12} h={17}><path d="M1 0V13L4 10.500L7 16.500L9.500 15.500L7 10H11.500Z" fill="#181818" /></Ico></Row>
        <Rule h="h-[2px]" />
        <Row h="h-[26px]"><Ico w={18} h={14}><rect x="1.500" y="1.500" width="15" height="11" stroke="#222" strokeWidth="1.500" /></Ico></Row>
        <Row h="h-[27px]"><div className="flex h-[26px] w-[27px] items-center justify-center border border-[#efa06a] bg-[#f1ca72]"><Ico w={18} h={18}><path d="M1 1L17 17" stroke="#111" strokeWidth="1.500" /></Ico></div></Row>
        <Row h="h-[25px]"><Ico w={19} h={19}><circle cx="9.500" cy="9.500" r="8.300" stroke="#222" strokeWidth="1.500" /></Ico></Row>
        <Row h="h-[27px]"><Ico w={20} h={20}><path d="M10 1L18.800 8L15.500 18H4.500L1.200 8Z" stroke="#222" strokeWidth="1.500" /></Ico></Row>
        <Row h="h-[24px]"><Ico w={21} h={12}><rect x="1" y="1" width="19" height="10" rx="5" stroke="#333" strokeWidth="1.500" /><path d="M5 6H8M6.500 4.500V7.500M13 6H16M14.500 4.500V7.500" stroke="#888" /></Ico></Row>
        <Rule h="h-[2px]" />
        <Row h="h-[26px]"><Dim bar="#1472e8" /></Row>
        <Row h="h-[16px]"><Ico w={10} h={10}><path d="M1 1L9 9M9 1L1 9" stroke="#4aa345" /><circle cx="5" cy="5" r="2" fill="#2ba534" /></Ico></Row>
        <Row h="h-[14px]"><Ico w={12} h={12}><rect x="1" y="1" width="10" height="10" stroke="#8b9a95" /><path d="M6 0V4M6 8V12M0 6H4M8 6H12" stroke="#8b9a95" /><circle cx="6" cy="6" r="1.500" fill="#2ba534" /></Ico></Row>
        <Row h="h-[14px]"><Ico w={12} h={12}><path d="M1.500 11C2 5 6 2 10.500 1.500" stroke="#222" strokeWidth="1.500" /></Ico></Row>
        <Row h="h-[14px]"><Ico w={13} h={12}><ellipse cx="6.500" cy="6" rx="5.500" ry="3.700" transform="rotate(-35 6.500 6)" stroke="#222" strokeWidth="1.500" /></Ico></Row>
        <Row h="h-[14px]"><Ico w={12} h={13}><path d="M1 11.500C6 11.500 6 8 6 6C6 3 8 1.500 11 1.500" stroke="#222" strokeWidth="1.500" /></Ico></Row>
        <Row h="h-[13px]"><Ico w={3} h={12}><path d="M1.500 0V12" stroke="#222" strokeWidth="1.500" strokeDasharray="3 1.200" /></Ico></Row>
        <Rule h="h-[2px]" />
        <Row h="h-[26px]"><Ico w={15} h={15}><path d="M1.500 14V1.500H14" stroke="#2c9b37" strokeWidth="1.700" /><path d="M2 5.500H5.500V2" stroke="#6c9c6c" /></Ico></Row>
        <Row h="h-[14px]"><Ico w={14} h={13}><path d="M1 11C2 5 5 2 10 1.500" stroke="#3aa646" strokeWidth="1.500" /><path d="M5 11L8 6L12 10M8 6L11 5" stroke="#777" /></Ico></Row>
        <Row h="h-[14px]"><Ico w={12} h={12}><path d="M6 0V12M4 2V10L.500 8.500V5ZM8 2V10L11.500 8.500V5Z" stroke="#b5c0cc" strokeDasharray="2 .700" /></Ico></Row>
        <Row h="h-[16px]"><Ico w={14} h={14}><path d="M1 8L7 3L12 6L6 11Z" fill="#bce9b8" stroke="#309a38" /><path d="M7 2H12V6M3 10V12.500H11L8 8" stroke="#555" /></Ico></Row>
        <Row h="h-[24px]"><Ico w={20} h={18}><path d="M6 4L13 10M5 10L14 3" stroke="#555" strokeWidth="1.700" /><circle cx="3.500" cy="3.500" r="2" stroke="#333" strokeWidth="1.300" /><circle cx="3.500" cy="10" r="2" stroke="#333" strokeWidth="1.300" /><path d="M13 8C16 7 17 5 18.500 2" stroke="#1b43d5" strokeWidth="1.700" /><path d="M4 17L9 11" stroke="#9ba1a7" /></Ico></Row>
        <Row h="h-[18px]"><Caret /></Row>
        <Row h="h-[24px]"><Ico w={17} h={20}><path d="M1 6L6 2V13L1 17Z" stroke="#888" /><path d="M9 6L14 2V12L9 16Z" fill="#9ce28e" stroke="#53a750" /><Plus /></Ico></Row>
        <Row h="h-[26px]"><Ico w={17} h={20}><path d="M1 6L6 2V13L1 17Z" stroke="#888" /><path d="M9 6L14 2V12L9 16Z" stroke="#a3343b" strokeDasharray="2 1" /><Plus /></Ico></Row>
        <Row h="h-[30px]"><Ico w={17} h={20}><path d="M14.500 2V12M2 3H15" stroke="#674c4c" strokeDasharray="3 1" /><path d="M1.500 2V16.500H10" stroke="#2668e5" strokeWidth="1.500" /><Plus /></Ico></Row>
        <Row h="h-[22px]"><Ico w={16} h={18}><path d="M5 2L12 1L15 5V13L10 17L3 15L1 9Z" stroke="#c1cae2" strokeDasharray="3 1.500" /></Ico></Row>
        <Rule h="h-[4px]" />
        <Row h="h-[24px]"><Ico w={18} h={18}><path d="M16 2L9 9" stroke="#444" strokeWidth="1.700" /><path d="M2 16L9 9" stroke="#eba329" strokeWidth="4" /><path d="M4 3L16 16" stroke="#555" strokeWidth="2" /><path d="M1 2L3 4L5 1L7 4L4 7L1 5Z" fill="#777" /></Ico></Row>
        <Row h="h-[8px]"><Caret /></Row>
        <Row h="h-[30px]"><Ico w={18} h={16}><path d="M1 10C8 10 5 3 15 3" stroke="#222" strokeWidth="1.500" /><path d="M9 7L16 14M16 7L9 14" stroke="#e11923" strokeWidth="2.500" /></Ico></Row>
        <div className="h-[8px]" />
        <Rule h="h-[2px]" />
      </div>
    </aside>
  );
}

export default function App() {
  return (
    <div className="flex h-[766px] w-[1000px] flex-col overflow-hidden bg-white font-['Noto_Sans_CJK_JP',sans-serif]">
      <TitleBar />
      <Ribbon />
      <div className="h-[6px] shrink-0 pt-[4px]"><div className="h-[2px] w-[960px] bg-[#9c9c8e]" /></div>
      <div className="flex h-[672px] shrink-0">
        <main className="relative w-[960px] shrink-0 border-r border-[#eee]">
          <GridDrawing />
          <FloatBars />
          <Message />
        </main>
        <SideBar />
      </div>
      <footer className="flex h-[13px] shrink-0 bg-[#efefef] pl-[657px] pt-[3px] font-['Open_Sans','Noto_Sans_CJK_JP',sans-serif] text-[8.500px] leading-[10px] text-[#222]">
        <span className="w-[111px] shrink-0 whitespace-nowrap border-l border-t border-[#aebad5] pl-[1px] tracking-[-0.1px]">ｽｹｯﾁの定義が不完全です。</span>
        <span className="ml-[3px] w-[74px] shrink-0 border-l border-t border-[#c2cae6] pl-[1px]">X = 15.26</span>
        <span className="ml-[3px] w-[75px] shrink-0 border-l border-t border-[#c2cae6] pl-[1px]">Y = 33.22</span>
        <span className="ml-[1px] flex-1 border-l border-t border-[#c2cae6]" />
      </footer>
    </div>
  );
}
